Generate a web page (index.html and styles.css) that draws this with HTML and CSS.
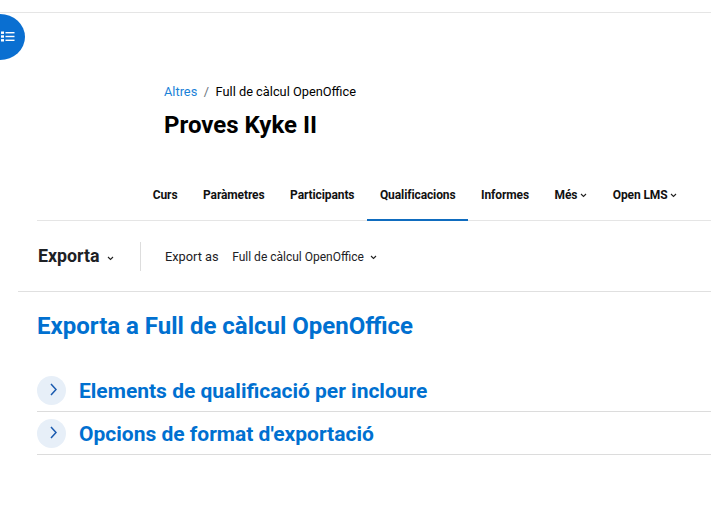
FILE: index.html
```html
<!DOCTYPE html>
<html lang="ca">
<head>
  <meta charset="UTF-8" />
  <meta name="viewport" content="width=device-width, initial-scale=1.0"/>
  <title>Proves Kyke II</title>
  <link rel="stylesheet" href="styles.css">
</head>
<body>
  <button class="drawer-btn" aria-label="Índex">
    <svg width="14" height="11" viewBox="0 0 14 11" fill="#fff">
      <rect x="0" y="0.5" width="3" height="2.4"/>
      <rect x="4.5" y="1" width="9" height="1.4"/>
      <rect x="0" y="4.3" width="3" height="2.4"/>
      <rect x="4.5" y="4.8" width="9" height="1.4"/>
      <rect x="0" y="8.1" width="3" height="2.4"/>
      <rect x="4.5" y="8.6" width="9" height="1.4"/>
    </svg>
  </button>

  <header class="page-head">
    <nav class="crumbs">
      <a href="#">Altres</a>
      <span class="sep">/</span>
      <span>Full de càlcul OpenOffice</span>
    </nav>
    <h1>Proves Kyke II</h1>
  </header>

  <nav class="tabs">
    <a href="#">Curs</a>
    <a href="#">Paràmetres</a>
    <a href="#">Participants</a>
    <a href="#" class="active">Qualificacions</a>
    <a href="#">Informes</a>
    <a href="#">Més <svg class="chev" width="7" height="5" viewBox="0 0 7 5"><path d="M1 1l2.500 2.500L6 1"/></svg></a>
    <a href="#">Open LMS <svg class="chev" width="7" height="5" viewBox="0 0 7 5"><path d="M1 1l2.500 2.500L6 1"/></svg></a>
  </nav>

  <div class="toolbar">
    <div class="tool-title">Exporta <svg class="chev" width="7" height="5" viewBox="0 0 7 5"><path d="M1 1l2.500 2.500L6 1"/></svg></div>
    <div class="tool-format">
      <span class="export-as">Export as</span>
      <span class="export-pick">Full de càlcul OpenOffice <svg class="chev" width="7" height="5" viewBox="0 0 7 5"><path d="M1 1l2.500 2.500L6 1"/></svg></span>
    </div>
  </div>

  <main class="content">
    <h2>Exporta a Full de càlcul OpenOffice</h2>
    <section class="fold">
      <span class="fold-btn"><svg width="7" height="13" viewBox="0 0 7 13"><path d="M1 1l5 5.500-5 5.500"/></svg></span>
      <h3>Elements de qualificació per incloure</h3>
    </section>
    <section class="fold">
      <span class="fold-btn"><svg width="7" height="13" viewBox="0 0 7 13"><path d="M1 1l5 5.500-5 5.500"/></svg></span>
      <h3>Opcions de format d'exportació</h3>
    </section>
  </main>
</body>
</html>
```

FILE: styles.css
```css
html {
  overflow: hidden;
}

body {
  margin: 0;
  height: 525px;
  overflow: hidden;
  font-family: Roboto, 'Liberation Sans', sans-serif;
  color: #000;
  background: #fff;
  padding-top: 12px;
  box-sizing: border-box;
}

body::before {
  content: "";
  display: block;
  height: 1px;
  background: #e5e5e5;
}

.drawer-btn {
  position: absolute;
  left: -25px;
  top: 14px;
  width: 50px;
  height: 46px;
  border: none;
  border-radius: 50%;
  background: #0a6fd1;
  padding: 0 0 2px 26px;
  display: flex;
  align-items: center;
}

.page-head {
  padding: 70px 0 0 164px;
  height: 96px;
}

.crumbs {
  font-size: 12.8px;
  line-height: 18px;
  display: flex;
  gap: 6.5px;
}

.crumbs a {
  color: #1a82d8;
  text-decoration: none;
}

.crumbs .sep {
  color: #6a737b;
}

h1 {
  margin: 10px 0 0;
  font-size: 24px;
  line-height: 28px;
  font-weight: 700;
}

.tabs {
  margin-left: 37px;
  height: 42px;
  padding-left: 103px;
  display: flex;
  border-bottom: 1px solid #e5e5e5;
  box-sizing: border-box;
}

.tabs a {
  padding: 0 12.75px;
  color: #111;
  text-decoration: none;
  font-size: 12px;
  letter-spacing: -0.1px;
  font-weight: 700;
  line-height: 33px;
  height: 42px;
  box-sizing: border-box;
}

.tabs a.active {
  border-bottom: 2px solid #0f6cbf;
}

.chev {
  fill: none;
  stroke: #222;
  stroke-width: 1.1;
  vertical-align: 1px;
}

.toolbar {
  margin-left: 18px;
  height: 71px;
  padding-left: 20px;
  display: flex;
  align-items: center;
  border-bottom: 1px solid #e0e0e0;
  box-sizing: border-box;
}

.tool-title {
  font-size: 17.8px;
  font-weight: 700;
  color: #1d2125;
  width: 102px;
  height: 29px;
  margin-top: 1px;
  line-height: 28px;
  border-right: 1px solid #ddd;
}

.tool-title .chev {
  margin-left: 3px;
}

.tool-format {
  padding-left: 24px;
  display: flex;
  align-items: center;
  gap: 13.5px;
  color: #1d2125;
}

.export-as {
  font-size: 12.8px;
}

.export-pick {
  font-size: 12px;
  padding-top: 1px;
}

.export-pick .chev {
  margin-left: 3px;
}

.content {
  margin-left: 37px;
}

h2 {
  margin: 20px 0 0;
  font-size: 24px;
  line-height: 28px;
  font-weight: 700;
  color: #0070d0;
  height: 57px;
}

.fold {
  height: 43px;
  display: flex;
  align-items: center;
  gap: 13px;
  border-bottom: 1px solid #dcdcdc;
  box-sizing: border-box;
}

.fold h3 {
  margin: 0;
  padding-top: 2px;
  font-size: 21px;
  font-weight: 700;
  color: #0070d0;
}

.fold-btn {
  width: 29px;
  height: 29px;
  border-radius: 50%;
  background: #e7eff8;
  display: flex;
  align-items: center;
  justify-content: center;
}

.fold-btn svg {
  fill: none;
  stroke: #1a5bb0;
  stroke-width: 1.5;
  margin: -2px 0 0 3px;
}
```
